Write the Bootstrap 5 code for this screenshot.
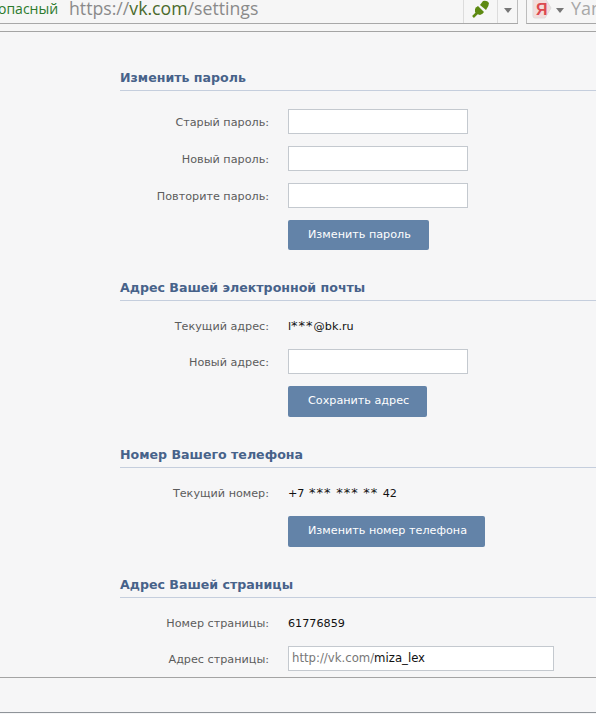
<!DOCTYPE html>
<html lang="ru">
<head>
  <meta charset="UTF-8" />
  <meta name="viewport" content="width=device-width, initial-scale=1.0"/>
  <title>Настройки</title>
  <link href="https://cdn.jsdelivr.net/npm/bootstrap@5.3.0/dist/css/bootstrap.min.css" rel="stylesheet">
  <style>
    html, body { height: 714px; overflow: hidden; }
    body {
      background-color: #f6f6f7;
      font-family: "DejaVu Sans", Tahoma, sans-serif;
      font-size: 11.2px;
      color: #222;
    }
    .browser-bar {
      height: 32px;
      background-color: #f6f6f6;
      border-bottom: 1px solid #a4a4a4;
      overflow: hidden;
    }
    .bar-left {
      height: 24px;
      border-bottom: 1px solid #a8a8a8;
      width: 518px;
      flex-shrink: 0;
    }
    .secure-txt { color: #2d7a2d; font-family: "Open Sans", sans-serif; font-size: 14px; margin-left: -2px; width: 66px; white-space: nowrap; line-height: 16px; padding-top: 1px; }
    .url-txt { color: #8a8a8a; font-family: "Open Sans", sans-serif; font-size: 17.7px; line-height: 16px; margin-left: 5px; white-space: nowrap; }
    .url-txt b { color: #4a6a2c; font-weight: 400; }
    .addon-btn { width: 34px; height: 23px; border-left: 1px solid #dcdcdc; }
    .drop-btn { width: 21px; height: 23px; border-left: 1px solid #dcdcdc; border-right: 1px solid #bdbdbd; }
    .tri { width: 0; height: 0; flex-shrink: 0; border-left: 4px solid transparent; border-right: 4px solid transparent; border-top: 5px solid #777; }
    .search-box { height: 24px; margin-left: 8px; flex-grow: 1; min-width: 0; border-left: 1px solid #bdbdbd; border-bottom: 1px solid #a8a8a8; padding-left: 5px; overflow: hidden; }
    .ya-txt { color: #a8a8a8; font-family: "Open Sans", sans-serif; font-size: 18px; line-height: 16px; white-space: nowrap; margin-left: -1px; }

    .settings-wrap { padding-left: 120px; padding-top: 37px; height: 646px; border-bottom: 1px solid #a4a4a4; overflow: hidden; }
    .sect-head {
      color: #47628a;
      font-weight: 700;
      font-size: 12.6px;
      line-height: 17px;
      padding-bottom: 4px;
      border-bottom: 1px solid #c5cedd;
      margin-bottom: 18px;
    }
    .form-line { display: flex; align-items: center; height: 25px; margin-bottom: 12px; }
    .text-line { height: 14px; margin-bottom: 16px; padding-top: 2px; }
    .lbl { width: 150px; text-align: right; color: #5c5c5c; flex-shrink: 0; padding-top: 4px; padding-right: 1px; }
    .text-line .lbl { padding-top: 0; }
    .val { margin-left: 18px; color: #111; line-height: 14px; }
    .phone-val { word-spacing: 1px; }
    .stars { font-size: 13px; letter-spacing: 1px; line-height: 10px; }
    .fake-input { margin-left: 18px; width: 180px; height: 25px; background: #fff; border: 1px solid #c4c9cf; border-radius: 0; padding: 0; }
    .wide-input { width: 266px; display: flex; align-items: center; padding-left: 3px; color: #777; font-size: 11.7px; }
    .wide-input span { color: #111; }
    .vk-btn {
      display: block;
      margin-left: 168px;
      height: 31px;
      padding: 0 18px 0 20px;
      background-color: #6383a8;
      border: 0;
      border-radius: 2px;
      color: #fff;
      font-size: 11.2px;
    }
    .vk-btn-first { height: 30px; }
    .sect-gap { margin-top: 29px; }
    .window-foot { height: 35px; border-bottom: 1px solid #8f9499; }
  </style>
</head>
<body>

  <!-- browser chrome -->
  <div class="browser-bar d-flex align-items-start">
    <div class="bar-left d-flex align-items-start">
      <div class="secure-txt">опасный</div>
      <div class="url-txt flex-grow-1">https://<b>vk.com</b>/settings</div>
      <div class="addon-btn d-flex justify-content-center">
        <svg width="20" height="18" viewBox="0 0 20 18"><path d="M2 17 L6 13" stroke="#5d8a12" stroke-width="2.5"/><path d="M4 9 Q5 7 7 6 L13 12 Q12 14 9 15 Q6 15 4 12 Z" fill="#5d8a12"/><path d="M9 5 L12 1 Q16 0 18 3 Q18 6 15 10 Z" fill="#5d8a12"/></svg>
      </div>
      <div class="drop-btn d-flex justify-content-center pt-1"><div class="tri mt-1"></div></div>
    </div>
    <div class="search-box d-flex align-items-start gap-1">
      <svg class="flex-shrink-0" width="20" height="19" viewBox="0 0 20 19"><path d="M2 -2 H13 L19 8 L13 18 H3 Q1 18 1 16 V0 Z" fill="#f3dcdc" stroke="#ddd"/><text x="4" y="15" font-family="Liberation Sans, sans-serif" font-size="16" font-weight="700" fill="#dc4a50">Я</text></svg>
      <div class="tri mt-2 me-1"></div>
      <div class="ya-txt">Yan</div>
    </div>
  </div>

  <div class="settings-wrap">
    <div class="sect-head">Изменить пароль</div>
    <div class="form-line"><div class="lbl">Старый пароль:</div><input class="fake-input" type="password"></div>
    <div class="form-line"><div class="lbl">Новый пароль:</div><input class="fake-input" type="password"></div>
    <div class="form-line"><div class="lbl">Повторите пароль:</div><input class="fake-input" type="password"></div>
    <button class="vk-btn vk-btn-first" type="button">Изменить пароль</button>

    <div class="sect-head sect-gap">Адрес Вашей электронной почты</div>
    <div class="form-line text-line"><div class="lbl">Текущий адрес:</div><div class="val">l<span class="stars">***</span>@bk.ru</div></div>
    <div class="form-line"><div class="lbl">Новый адрес:</div><input class="fake-input" type="text"></div>
    <button class="vk-btn" type="button">Сохранить адрес</button>

    <div class="sect-head sect-gap">Номер Вашего телефона</div>
    <div class="form-line text-line"><div class="lbl">Текущий номер:</div><div class="val phone-val">+7 <span class="stars">***</span> <span class="stars">***</span> <span class="stars">**</span> 42</div></div>
    <button class="vk-btn" type="button">Изменить номер телефона</button>

    <div class="sect-head sect-gap">Адрес Вашей страницы</div>
    <div class="form-line text-line"><div class="lbl">Номер страницы:</div><div class="val">61776859</div></div>
    <div class="form-line"><div class="lbl">Адрес страницы:</div><div class="fake-input wide-input">http://vk.com/<span>miza_lex</span></div></div>
  </div>
  <div class="window-foot"></div>

  <script src="https://cdn.jsdelivr.net/npm/bootstrap@5.3.0/dist/js/bootstrap.bundle.min.js"></script>
</body>
</html>
